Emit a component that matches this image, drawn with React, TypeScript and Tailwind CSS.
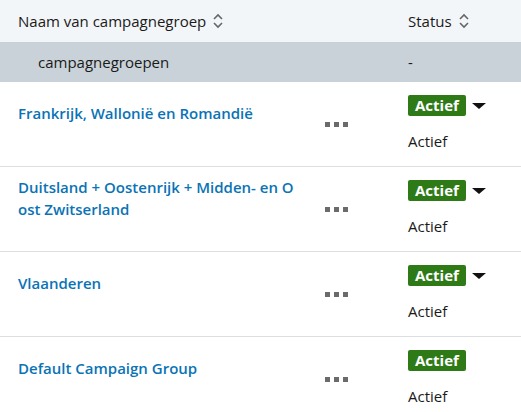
import React from "react";

type Group = {
  name: string;
  hasMenu: boolean;
};

const groups: Group[] = [
  { name: "Frankrijk, Wallonië en Romandië", hasMenu: true },
  { name: "Duitsland + Oostenrijk + Midden- en Oost Zwitserland", hasMenu: true },
  { name: "Vlaanderen", hasMenu: true },
  { name: "Default Campaign Group", hasMenu: false },
];

function SortIcon() {
  return (
    <svg width="12" height="16" viewBox="0 0 12 16" className="ml-[6px] text-[#666]">
      <path d="M2 6 L6 2 L10 6" fill="none" stroke="currentColor" strokeWidth="1.6" />
      <path d="M2 10 L6 14 L10 10" fill="none" stroke="currentColor" strokeWidth="1.6" />
    </svg>
  );
}

function Ellipsis() {
  return (
    <div className="flex gap-[4px]">
      <span className="w-[5px] h-[5px] bg-[#6b6b6b]" />
      <span className="w-[5px] h-[5px] bg-[#6b6b6b]" />
      <span className="w-[5px] h-[5px] bg-[#6b6b6b]" />
    </div>
  );
}

function Row({ group }: { group: Group }) {
  return (
    <div className="flex h-[85px] border-b border-[#dcdfe2]">
      {/* naam */}
      <div className="w-[307px] pl-[18px] h-[62px] flex items-center">
        <a className="text-[#0a73b5] font-semibold leading-[22px] break-all w-[281px]">
          {group.name}
        </a>
      </div>

      {/* acties */}
      <div className="w-[101px] flex items-center pl-[18px]">
        <Ellipsis />
      </div>

      {/* status */}
      <div className="pt-[13px]">
        <div className="flex items-center">
          <span className="bg-[#2d7a17] text-white font-bold rounded-[2px] h-[21px] px-[7px] flex items-center text-[15px]">
            Actief
          </span>
          {group.hasMenu && (
            <svg width="14" height="6" viewBox="0 0 14 6" className="ml-[6px]">
              <path d="M0 0 L14 0 L7 6 Z" fill="#111" />
            </svg>
          )}
        </div>
        <p className="mt-[15px] text-[#1a1a1a] leading-[20px]">Actief</p>
      </div>
    </div>
  );
}

export default function App() {
  return (
    <div
      className="w-[521px] h-[412px] overflow-hidden bg-white text-[15px] text-[#1a1a1a]"
      style={{ fontFamily: '"Open Sans", sans-serif' }}
    >
      {/* header */}
      <div className="flex h-[42px] bg-[#f3f6f8] items-center">
        <div className="w-[408px] pl-[18px] flex items-center">
          Naam van campagnegroep
          <SortIcon />
        </div>
        <div className="flex items-center">
          Status
          <SortIcon />
        </div>
      </div>

      {/* groep */}
      <div className="flex h-[40px] bg-[#c8d2d8] items-center">
        <div className="w-[408px] pl-[38px] font-medium">campagnegroepen</div>
        <div>-</div>
      </div>

      {groups.map((g, i) => (
        <Row key={i} group={g} />
      ))}
    </div>
  );
}
